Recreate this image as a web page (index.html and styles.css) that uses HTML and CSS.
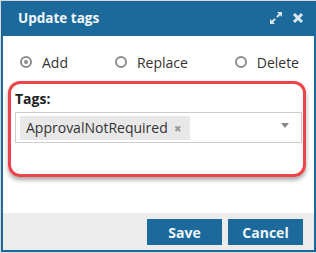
FILE: index.html
```html
<!doctype html>
<html>
<head>
<meta charset="utf-8">
<link rel="stylesheet" href="styles.css">
<title>Update tags</title>
</head>
<body>
<div class="dialog">
    <div class="dialog-header">
        <span class="dialog-title">Update tags</span>
        <span class="dialog-tools">
            <svg class="tool" width="14" height="14" viewBox="0 0 14 14">
                <path d="M8 1h5v5l-1.8-1.8-2.6 2.6-1.4-1.4 2.6-2.6z M6 13H1V8l1.8 1.8 2.6-2.6 1.4 1.4-2.6 2.6z" fill="#dbe6ee"/>
            </svg>
            <svg class="tool" width="12" height="12" viewBox="0 0 12 12">
                <path d="M2 2l8 8M10 2l-8 8" stroke="#dbe6ee" stroke-width="3"/>
            </svg>
        </span>
    </div>
    <div class="dialog-body">
        <div class="modes">
            <label class="mode"><span class="radio checked"></span>Add</label>
            <label class="mode"><span class="radio"></span>Replace</label>
            <label class="mode"><span class="radio"></span>Delete</label>
        </div>
        <div class="highlight">
            <div class="field-label">Tags:</div>
            <div class="select">
                <span class="chip">ApprovalNotRequired <span class="chip-x">&#10006;</span></span>
                <span class="caret"></span>
            </div>
        </div>
    </div>
    <div class="dialog-footer">
        <button class="btn">Save</button>
        <button class="btn">Cancel</button>
    </div>
</div>
</body>
</html>
```

FILE: styles.css
```css
html,
body {
    margin: 0;
    padding: 0;
}
body {
    background: #d9d9d9;
    font-family: "Open Sans", "Noto Sans", Arial, sans-serif;
    color: #333;
}
.dialog {
    margin: 1px 0 0 1px;
    width: 315px;
    height: 251px;
    box-sizing: border-box;
    border: 2px solid #1c6a9b;
    border-top: 0;
    background: #fff;
    display: flex;
    flex-direction: column;
}
.dialog-header {
    height: 35px;
    background: #1c6a9b;
    display: flex;
    align-items: center;
    justify-content: space-between;
    padding: 0 10px 0 15px;
    flex-shrink: 0;
}
.dialog-title {
    color: #f2f6f9;
    font-weight: 700;
    font-size: 13.5px;
    margin-top: -2px;
}
.dialog-tools {
    display: flex;
    align-items: center;
    gap: 9px;
    margin-top: -2px;
}
.tool {
    display: block;
}
.dialog-body {
    flex: 1;
}
.modes {
    display: flex;
    justify-content: space-between;
    padding: 16px 15px 0 17px;
    height: 20px;
}
.mode {
    display: flex;
    align-items: center;
    font-size: 14px;
    color: #333;
}
.radio {
    width: 8px;
    height: 8px;
    border: 2px solid #8c8c8c;
    border-radius: 50%;
    margin-right: 10px;
    position: relative;
}
.radio.checked:after {
    content: "";
    position: absolute;
    left: 2px;
    top: 2px;
    width: 4px;
    height: 4px;
    border-radius: 50%;
    background: #8c8c8c;
}
.highlight {
    margin: 9px 8px 0 5px;
    height: 85px;
    border: 3px solid #ec4449;
    border-radius: 12px;
    box-shadow: 0 3px 4px rgba(0, 0, 0, 0.35);
    padding: 5px 1px 0 4px;
}
.field-label {
    font-size: 14px;
    font-weight: 700;
    color: #222;
    line-height: 19px;
}
.select {
    margin-top: 4px;
    height: 29px;
    border: 1px solid #ccc;
    display: flex;
    align-items: center;
    justify-content: space-between;
    padding: 0 12px 0 4px;
}
.chip {
    background: #e8e8e8;
    height: 24px;
    line-height: 24px;
    padding: 0 7px 0 6px;
    width: 157px;
    font-size: 14px;
    color: #333;
}
.chip-x {
    font-size: 9px;
    color: #999;
    margin-left: 3px;
    vertical-align: 1px;
}
.caret {
    width: 0;
    height: 0;
    border-left: 4px solid transparent;
    border-right: 4px solid transparent;
    border-top: 5px solid #888;
    margin-top: -4px;
}
.dialog-footer {
    height: 37px;
    background: #ececec;
    display: flex;
    justify-content: flex-end;
    align-items: flex-start;
    gap: 6px;
    padding: 6px 11px 0 0;
    box-sizing: border-box;
    flex-shrink: 0;
}
.btn {
    width: 75px;
    height: 26px;
    border: 0;
    background: #1c6a9b;
    color: #eef3f7;
    font-family: "Open Sans", "Noto Sans", Arial, sans-serif;
    font-weight: 700;
    font-size: 14px;
    padding: 0;
}
```
